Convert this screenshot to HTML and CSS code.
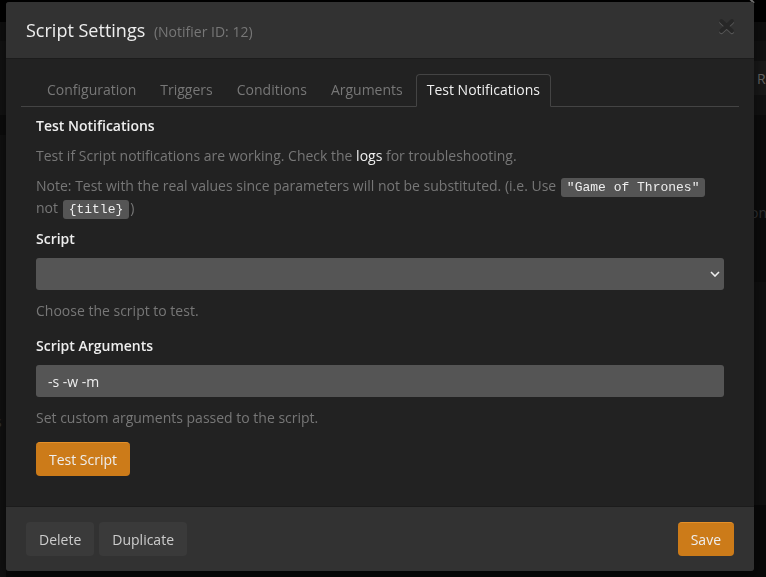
FILE: index.html
```html
<!DOCTYPE html>
<html lang="en">
<head>
<meta charset="utf-8">
<meta name="viewport" content="width=device-width, initial-scale=1">
<title>Script Settings</title>
<link rel="stylesheet" href="styles.css">
</head>
<body>
<div class="page-behind" aria-hidden="true">
  <svg class="behind-search" viewBox="0 0 10 10"><path d="M1 1 9 9" /></svg>
  <span class="behind-text behind-button">R</span>
  <span class="behind-text behind-label">on</span>
  <span class="behind-text behind-left">s</span>
</div>
<main class="modal" role="dialog" aria-labelledby="modal-title">
  <header class="modal-header">
    <h1 class="modal-title" id="modal-title">Script Settings <small>(Notifier ID: 12)</small></h1>
    <button class="close" type="button" aria-label="Close">
      <svg viewBox="0 0 18 18"><path class="close-light" d="M3.3 5.3 14 15.2M14 5.3 3.3 15.2" /><path class="close-dark" d="M3.3 4 14 14M14 4 3.3 14" /></svg>
    </button>
  </header>
  <div class="modal-body">
    <nav class="tabs">
      <a class="tab" href="#configuration">Configuration</a>
      <a class="tab" href="#triggers">Triggers</a>
      <a class="tab" href="#conditions">Conditions</a>
      <a class="tab" href="#arguments">Arguments</a>
      <a class="tab active" href="#test" aria-current="page">Test Notifications</a>
    </nav>
    <form class="pane" id="test">
      <h2 class="label">Test Notifications</h2>
      <p class="help">Test if Script notifications are working. Check the <a href="#logs">logs</a> for troubleshooting.</p>
      <p class="help">Note: Test with the real values since parameters will not be substituted. (i.e. Use <code>"Game of Thrones"</code> not <code>{title}</code>)</p>
      <div class="field">
        <label class="label" for="script">Script</label>
        <div class="select-wrap">
          <select class="control" id="script"><option></option></select>
          <svg class="chevron" viewBox="0 0 10 6"><path d="M1 1 5 5 9 1" /></svg>
        </div>
        <p class="help">Choose the script to test.</p>
      </div>
      <div class="field">
        <label class="label" for="arguments">Script Arguments</label>
        <input class="control" id="arguments" type="text" value="-s -w -m">
        <p class="help">Set custom arguments passed to the script.</p>
      </div>
      <button class="btn btn-bright" type="button">Test Script</button>
    </form>
  </div>
  <footer class="modal-footer">
    <button class="btn" type="button">Delete</button>
    <button class="btn" type="button">Duplicate</button>
    <button class="btn btn-bright save" type="button">Save</button>
  </footer>
</main>
</body>
</html>
```
FILE: styles.css
```css
* {
  box-sizing: border-box;
}

body {
  margin: 0;
  padding: 2px 12px 6px 6px;
  background: #000;
  color: #777;
  font: 14px/22px "Open Sans", "Noto Sans", sans-serif;
}

/* Dimmed page that shows round the dialog */
.page-behind {
  position: fixed;
  inset: 0;
  overflow: hidden;
  background:
    linear-gradient(#000 22px, #0f0f0f 22px 41px, #131313 41px 115px, #0c0c0c 115px 135px, #111 135px) left / 6px 100% no-repeat,
    linear-gradient(#000 22px, #0e0e0e 22px 41px, #121212 41px 115px, #0c0c0c 115px 282px, #101010 282px 505px, #090909 505px);
}

.behind-search {
  position: absolute;
  top: -6px;
  right: 11px;
  width: 10px;
  height: 10px;
  fill: none;
  stroke: #777;
  stroke-width: 2;
}

.behind-text {
  position: absolute;
  color: #333;
}

.behind-button {
  top: 61px;
  right: 0;
  width: 12px;
  height: 34px;
  padding-left: 3px;
  background: #191919;
  color: #666;
  line-height: 36px;
}

.behind-label {
  top: 202px;
  right: -1px;
}

.behind-left {
  top: 411px;
  left: -5px;
}

.modal {
  position: relative;
  overflow: hidden;
  border-radius: 3px;
  background: #222;
  box-shadow: 0 5px 15px rgba(0, 0, 0, 0.5);
}

.modal-header {
  display: flex;
  justify-content: space-between;
  align-items: flex-start;
  padding: 15px 18px 13px 20px;
  border-bottom: 1px solid #1c1c1c;
  background: #323232;
}

.modal-title {
  margin: 0;
  color: #eee;
  font-size: 18px;
  font-weight: 400;
  line-height: 26px;
}

.modal-title small {
  margin-left: 4px;
  color: #777;
  font-size: 14px;
}

.close {
  width: 18px;
  height: 18px;
  padding: 0;
  border: 0;
  background: none;
}

.close svg {
  display: block;
}

.close path {
  fill: none;
  stroke-width: 4;
  stroke-linecap: round;
}

.close-light {
  stroke: #555;
}

.close-dark {
  stroke: #272727;
}

.modal-body {
  padding: 15px 15px 30px;
}

.tabs {
  display: flex;
  gap: 2px;
  padding-left: 15px;
  border-bottom: 1px solid #444;
}

.tab {
  margin-bottom: -1px;
  padding: 4px 10px 5px;
  border: 1px solid transparent;
  border-radius: 4px 4px 0 0;
  color: #777;
  text-decoration: none;
}

.tab.active {
  border-color: #444;
  border-bottom-color: #222;
  background: #222;
  color: #eee;
}

.pane {
  padding: 8px 15px 0;
}

.label {
  display: block;
  margin: 0 0 8px;
  color: #eee;
  font-size: 14px;
  font-weight: 600;
  line-height: 22px;
}

.help {
  margin: 0 0 8px;
}

.help a {
  color: #eee;
  text-decoration: none;
}

code {
  margin: 0 1px;
  padding: 2px 6px;
  border-radius: 3px;
  background: #555;
  color: #eee;
  font: 13px "Liberation Mono", monospace;
}

.field {
  margin: 9px 0 13px;
}

.select-wrap {
  position: relative;
}

.control {
  display: block;
  width: 100%;
  height: 32px;
  margin-bottom: 10px;
  padding: 6px 12px;
  border: 0;
  border-radius: 3px;
  appearance: none;
  background: #555;
  color: #eee;
  font: 14px/20px "Open Sans", "Noto Sans", sans-serif;
}

.chevron {
  position: absolute;
  top: 13px;
  right: 4px;
  width: 10px;
  height: 6px;
  fill: none;
  stroke: #eee;
  stroke-width: 1.6;
  pointer-events: none;
}

.btn {
  height: 34px;
  padding: 1px 13px 0;
  border: 0;
  border-radius: 4px;
  background: #3a3a3a;
  color: #ccc;
  font: 14px/33px "Open Sans", "Noto Sans", sans-serif;
}

.btn-bright {
  padding-top: 0;
  border-top: 1px solid #e59029;
  background: #cc7b19;
  color: #eee;
}

.modal-footer {
  display: flex;
  gap: 5px;
  padding: 15px 20px;
  border-top: 1px solid #1c1c1c;
  background: #323232;
}

.save {
  margin-left: auto;
}
```
